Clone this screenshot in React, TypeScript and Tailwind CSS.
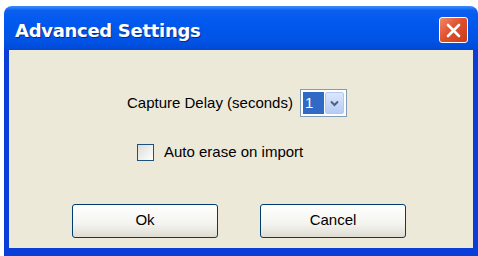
export default function App() {
  return (
    <div className="w-[478px] h-[256px] bg-white overflow-hidden font-['Liberation_Sans',_sans-serif]">
      <div className="ml-[4px] mt-[6px] w-[474px] flex flex-col">
        {/* title bar */}
        <div className="h-[44px] rounded-t-[8px] flex items-center justify-between pl-[11px] pr-[10px] pt-[4px] bg-[linear-gradient(to_bottom,#3d8ff8_0%,#0a5ff0_10%,#0058ee_40%,#0053e4_80%,#0048d6_100%)]">
          <span className="text-white font-bold text-[18px] font-['DejaVu_Sans',_sans-serif] tracking-[-0.3px] [text-shadow:1px_1px_0_#0a2a8a]">
            Advanced Settings
          </span>
          <button className="w-[29px] h-[26px] rounded-[3px] border border-white bg-[linear-gradient(135deg,#f08a6a_0%,#e0512e_45%,#c93c1c_100%)] flex items-center justify-center">
            <svg width="17" height="17" viewBox="0 0 17 17">
              <path d="M3 3 L14 14 M14 3 L3 14" stroke="white" strokeWidth="2.6" strokeLinecap="round" />
            </svg>
          </button>
        </div>
        {/* body */}
        <div className="h-[206px] bg-[#ece9d8] border-x-[5px] border-b-[8px] border-[#0a3ed8] flex flex-col">
          <div className="mt-[39px] pl-[118px] flex items-center gap-[7px]">
            <span className="text-[15px] text-black">Capture Delay (seconds)</span>
            <div className="w-[47px] h-[28px] border border-[#7f9db9] bg-white flex items-stretch p-[2px]">
              <div className="flex-1 bg-[#316ac5] text-white text-[15px] leading-[22px] pl-[2px]">1</div>
              <div className="w-[19px] ml-[1px] rounded-[2px] bg-[linear-gradient(to_bottom,#dce7fd,#b6cbf5)] border border-[#b4c8f6] flex items-center justify-center">
                <svg width="9" height="7" viewBox="0 0 9 7">
                  <path d="M1 1.5 L4.5 5 L8 1.5" fill="none" stroke="#4d6185" strokeWidth="2" />
                </svg>
              </div>
            </div>
          </div>
          <div className="mt-[24px] pl-[128px] flex items-center gap-[10px]">
            <div className="w-[17px] h-[17px] border border-[#1c5180] bg-[linear-gradient(135deg,#dcdcd7,#ffffff)]" />
            <span className="text-[15px] text-black">Auto erase on import</span>
          </div>
          <div className="mt-[40px] pl-[63px] flex gap-[42px]">
            <button className="w-[146px] h-[34px] rounded-[3px] border border-[#003c74] bg-[linear-gradient(to_bottom,#ffffff,#f3f3ef_60%,#dedcd2)] text-[15px] text-black">
              Ok
            </button>
            <button className="w-[146px] h-[34px] rounded-[3px] border border-[#003c74] bg-[linear-gradient(to_bottom,#ffffff,#f3f3ef_60%,#dedcd2)] text-[15px] text-black">
              Cancel
            </button>
          </div>
        </div>
      </div>
    </div>
  )
}
